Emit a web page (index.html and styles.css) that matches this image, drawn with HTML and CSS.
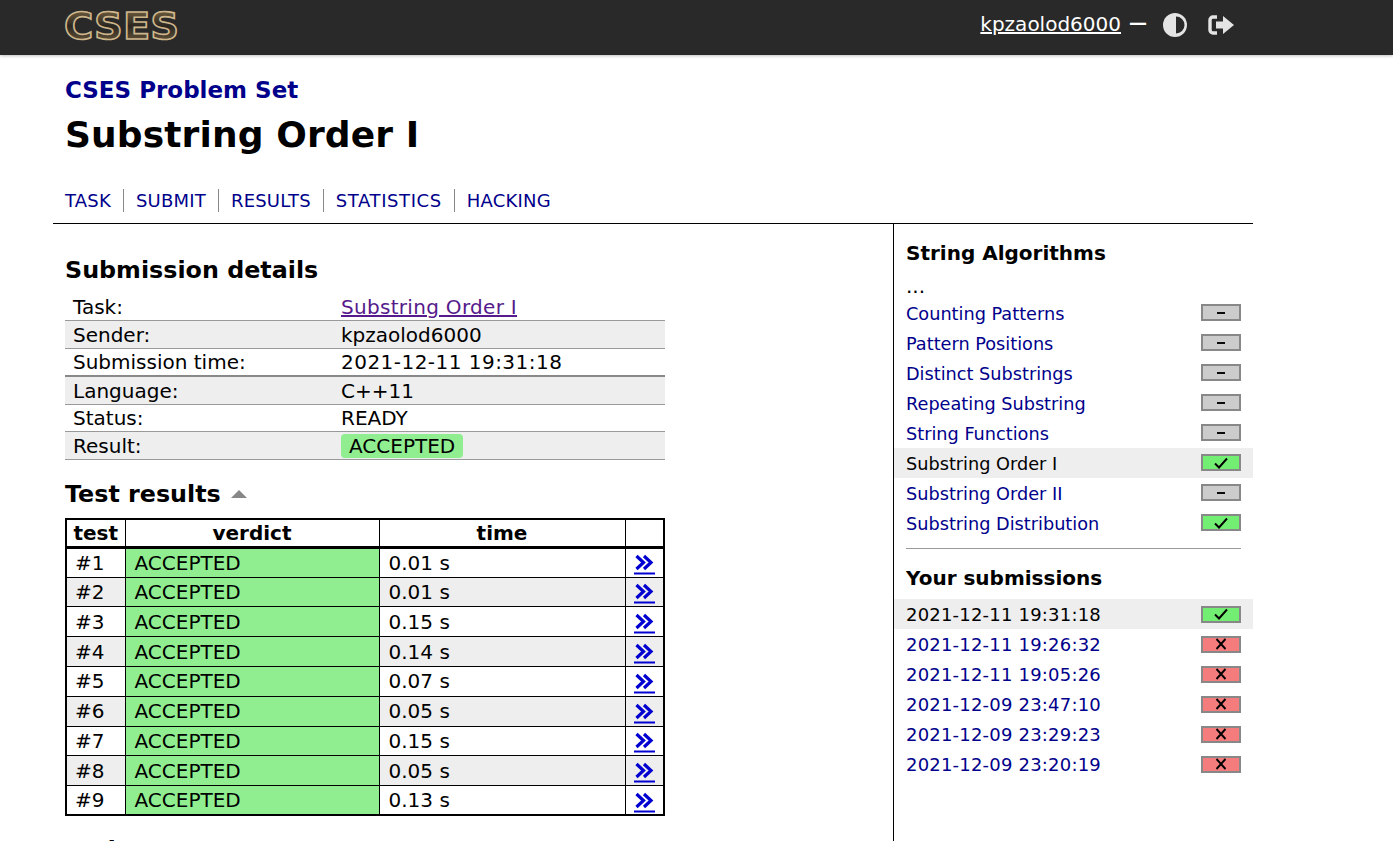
FILE: index.html
```html
<!DOCTYPE html>
<html lang="en">
<head>
    <meta charset="UTF-8">
    <title>CSES - Substring Order I - Submission details</title>
    <link rel="stylesheet" href="styles.css">
</head>
<body>
    <div class="header">
        <div class="header-inner">
            <a class="logo" href="#" aria-label="CSES">
                <svg width="130" height="36" viewBox="0 0 130 36">
                    <defs>
                        <linearGradient id="logoFill" x1="0" y1="0" x2="0" y2="1">
                            <stop offset="0" stop-color="#8a7248"/>
                            <stop offset="0.5" stop-color="#2a2620"/>
                            <stop offset="1" stop-color="#7a6440"/>
                        </linearGradient>
                    </defs>
                    <text class="logo-text" x="1" y="32" textLength="115" lengthAdjust="spacingAndGlyphs">CSES</text>
                </svg>
            </a>
            <div class="controls">
                <a class="username" href="#">kpzaolod6000</a>
                <span class="dash">—</span>
                <svg class="ctrl-icon theme" width="26" height="26" viewBox="0 0 26 26">
                    <circle cx="13" cy="13" r="12" fill="#e4e4e4"/>
                    <path d="M14 4.500a8.500 8.500 0 0 1 0 17z" fill="#292929"/>
                </svg>
                <svg class="ctrl-icon logout" width="28" height="24" viewBox="0 0 28 24">
                    <path d="M10 4H6a3 3 0 0 0-3 3v10a3 3 0 0 0 3 3h4" fill="none" stroke="#e4e4e4" stroke-width="3.4"/>
                    <path d="M9 8.500h7V3l11 9-11 9v-5.500H9z" fill="#e4e4e4"/>
                </svg>
            </div>
        </div>
    </div>

    <div class="page">
        <div class="title-block">
            <div class="crumb">CSES Problem Set</div>
            <h1>Substring Order I</h1>
            <ul class="nav">
                <li><a href="#">TASK</a></li>
                <li><a href="#">SUBMIT</a></li>
                <li><a href="#">RESULTS</a></li>
                <li class="wide"><a href="#">STATISTICS</a></li>
                <li><a href="#">HACKING</a></li>
            </ul>
        </div>

        <div class="columns">
            <div class="content">
                <h2 class="first">Submission details</h2>
                <table class="details">
                    <tr><td class="key">Task:</td><td><a class="visited" href="#">Substring Order I</a></td></tr>
                    <tr><td class="key">Sender:</td><td>kpzaolod6000</td></tr>
                    <tr><td class="key">Submission time:</td><td class="stamp">2021-12-11 19:31:18</td></tr>
                    <tr><td class="key">Language:</td><td>C++11</td></tr>
                    <tr><td class="key">Status:</td><td>READY</td></tr>
                    <tr><td class="key">Result:</td><td><span class="badge">ACCEPTED</span></td></tr>
                </table>

                <h2>Test results <span class="arrow"></span></h2>
                <table class="tests">
                    <tr><th class="col-test">test</th><th class="col-verdict">verdict</th><th class="col-time">time</th><th class="col-link"></th></tr>
                    <tr><td>#1</td><td class="ok">ACCEPTED</td><td class="secs">0.01 s</td><td class="more"><a href="#"><svg width="22" height="22" viewBox="0 0 22 22"><use href="#chevrons"/></svg></a></td></tr>
                    <tr><td>#2</td><td class="ok">ACCEPTED</td><td class="secs">0.01 s</td><td class="more"><a href="#"><svg width="22" height="22" viewBox="0 0 22 22"><use href="#chevrons"/></svg></a></td></tr>
                    <tr><td>#3</td><td class="ok">ACCEPTED</td><td class="secs">0.15 s</td><td class="more"><a href="#"><svg width="22" height="22" viewBox="0 0 22 22"><use href="#chevrons"/></svg></a></td></tr>
                    <tr><td>#4</td><td class="ok">ACCEPTED</td><td class="secs">0.14 s</td><td class="more"><a href="#"><svg width="22" height="22" viewBox="0 0 22 22"><use href="#chevrons"/></svg></a></td></tr>
                    <tr><td>#5</td><td class="ok">ACCEPTED</td><td class="secs">0.07 s</td><td class="more"><a href="#"><svg width="22" height="22" viewBox="0 0 22 22"><use href="#chevrons"/></svg></a></td></tr>
                    <tr><td>#6</td><td class="ok">ACCEPTED</td><td class="secs">0.05 s</td><td class="more"><a href="#"><svg width="22" height="22" viewBox="0 0 22 22"><use href="#chevrons"/></svg></a></td></tr>
                    <tr><td>#7</td><td class="ok">ACCEPTED</td><td class="secs">0.15 s</td><td class="more"><a href="#"><svg width="22" height="22" viewBox="0 0 22 22"><use href="#chevrons"/></svg></a></td></tr>
                    <tr><td>#8</td><td class="ok">ACCEPTED</td><td class="secs">0.05 s</td><td class="more"><a href="#"><svg width="22" height="22" viewBox="0 0 22 22"><use href="#chevrons"/></svg></a></td></tr>
                    <tr><td>#9</td><td class="ok">ACCEPTED</td><td class="secs">0.13 s</td><td class="more"><a href="#"><svg width="22" height="22" viewBox="0 0 22 22"><use href="#chevrons"/></svg></a></td></tr>
                </table>

                <h2>Code</h2>
            </div>

            <div class="sidebar">
                <h3>String Algorithms</h3>
                <div class="dots">...</div>
                <ul class="task-list problems">
                    <li><a href="#">Counting Patterns</a><span class="box none"><svg viewBox="0 0 16 12"><use href="#dash"/></svg></span></li>
                    <li><a href="#">Pattern Positions</a><span class="box none"><svg viewBox="0 0 16 12"><use href="#dash"/></svg></span></li>
                    <li><a href="#">Distinct Substrings</a><span class="box none"><svg viewBox="0 0 16 12"><use href="#dash"/></svg></span></li>
                    <li><a href="#">Repeating Substring</a><span class="box none"><svg viewBox="0 0 16 12"><use href="#dash"/></svg></span></li>
                    <li><a href="#">String Functions</a><span class="box none"><svg viewBox="0 0 16 12"><use href="#dash"/></svg></span></li>
                    <li class="current">Substring Order I<span class="box good"><svg viewBox="0 0 16 12"><use href="#check"/></svg></span></li>
                    <li><a href="#">Substring Order II</a><span class="box none"><svg viewBox="0 0 16 12"><use href="#dash"/></svg></span></li>
                    <li><a href="#">Substring Distribution</a><span class="box good"><svg viewBox="0 0 16 12"><use href="#check"/></svg></span></li>
                </ul>
                <hr>
                <h3 class="spaced">Your submissions</h3>
                <ul class="task-list dates">
                    <li class="current">2021-12-11 19:31:18<span class="box good"><svg viewBox="0 0 16 12"><use href="#check"/></svg></span></li>
                    <li><a href="#">2021-12-11 19:26:32</a><span class="box bad"><svg viewBox="0 0 16 12"><use href="#cross"/></svg></span></li>
                    <li><a href="#">2021-12-11 19:05:26</a><span class="box bad"><svg viewBox="0 0 16 12"><use href="#cross"/></svg></span></li>
                    <li><a href="#">2021-12-09 23:47:10</a><span class="box bad"><svg viewBox="0 0 16 12"><use href="#cross"/></svg></span></li>
                    <li><a href="#">2021-12-09 23:29:23</a><span class="box bad"><svg viewBox="0 0 16 12"><use href="#cross"/></svg></span></li>
                    <li><a href="#">2021-12-09 23:20:19</a><span class="box bad"><svg viewBox="0 0 16 12"><use href="#cross"/></svg></span></li>
                </ul>
            </div>
        </div>
    </div>

    <svg class="icon-defs" width="0" height="0">
        <defs>
            <g id="chevrons">
                <path d="M2.500 3l7 6.500-7 6.500M10 3l7 6.500-7 6.500" fill="none" stroke="#0000d0" stroke-width="3.200"/>
                <path d="M0 20.500h21" stroke="#0000d0" stroke-width="2"/>
            </g>
            <path id="dash" d="M4 6h8"/>
            <path id="check" d="M2 6.500l4 4 8-9"/>
            <path id="cross" d="M3.500 1l9 10M12.500 1l-9 10"/>
        </defs>
    </svg>
</body>
</html>
```

FILE: styles.css
```css
* {
    box-sizing: border-box;
}

body {
    margin: 0;
    font-family: "DejaVu Sans", Verdana, sans-serif;
    font-size: 18px;
    color: #000;
    background: #fff;
}

a {
    color: #00008b;
    text-decoration: none;
}

.icon-defs {
    position: absolute;
}

.header {
    height: 55px;
    background: #292929;
    box-shadow: 0 1px 3px rgba(0,0,0,0.25);
}

.header-inner {
    width: 1200px;
    margin-left: 53px;
    padding: 0 12px 0 10px;
    height: 50px;
    display: flex;
    justify-content: space-between;
    align-items: center;
}

.logo {
    display: block;
    height: 36px;
}

.logo-text {
    font-family: "DejaVu Sans", sans-serif;
    font-weight: bold;
    font-size: 38px;
    fill: url(#logoFill);
    stroke: #cdb68c;
    stroke-width: 1.6px;
}

.controls {
    display: flex;
    align-items: center;
    padding-right: 6px;
}

.username {
    color: #fff;
    font-size: 20px;
    line-height: 24px;
    margin-top: -2px;
    text-decoration: underline;
}

.dash {
    color: #fff;
    font-size: 18px;
    font-weight: bold;
    margin-left: 8px;
    margin-top: -5px;
}

.ctrl-icon.theme {
    margin-left: 15px;
}

.ctrl-icon.logout {
    margin-left: 19px;
}

.page {
    width: 1200px;
    margin-left: 53px;
}

.title-block {
    padding: 20px 12px 0;
    height: 169px;
    border-bottom: 1px solid #000;
}

.crumb {
    color: #00008b;
    font-size: 23px;
    font-weight: bold;
    line-height: 30px;
}

h1 {
    margin: 8px 0 0;
    font-size: 36px;
    line-height: 44px;
    letter-spacing: 0.12px;
}

.nav {
    list-style: none;
    margin: 32px 0 0;
    padding: 0;
    display: flex;
}

.nav li {
    height: 23px;
    line-height: 24px;
    padding: 0 12px;
    letter-spacing: 0.2px;
    border-right: 1px solid #888;
}

.nav li.wide {
    letter-spacing: 0.6px;
}

.nav li:first-child {
    padding-left: 0;
}

.nav li:last-child {
    border-right: none;
}

.columns {
    display: flex;
}

.content {
    width: 840px;
    padding: 0 12px;
}

h2 {
    margin: 18px 0 8px;
    font-size: 23.8px;
    line-height: 32px;
}

h2.first {
    margin-top: 30px;
    margin-bottom: 7px;
}

.arrow {
    display: inline-block;
    width: 0;
    height: 0;
    margin-left: 2px;
    vertical-align: 4px;
    border-left: 8px solid transparent;
    border-right: 8px solid transparent;
    border-bottom: 8px solid #888;
}

.details {
    width: 600px;
    border-collapse: collapse;
    font-size: 20px;
}

.details td {
    height: 27.8px;
    padding: 0 8px;
    border-bottom: 1px solid #999;
    line-height: 26px;
}

.details .key {
    width: 268px;
}

.details tr:nth-child(even) td {
    background: #eee;
}

.details tr:nth-child(3) td {
    border-bottom: 2px solid #888;
}

.details .stamp {
    letter-spacing: 0.47px;
}

.visited {
    color: #551a8b;
    letter-spacing: 0.3px;
    text-decoration: underline;
}

.badge {
    display: inline-block;
    padding: 0 8px;
    background: #90ee90;
    border-radius: 4px;
    line-height: 24px;
}

.tests {
    width: 600px;
    margin-bottom: 2px;
    border-collapse: collapse;
    font-size: 20px;
    border: 2px solid #000;
}

.tests th {
    height: 28px;
    padding: 0;
    border: 1px solid #000;
    border-bottom: 3px solid #000;
    line-height: 24px;
}

.tests td {
    height: 29.8px;
    padding: 0 8px;
    border: 1px solid #000;
}

.tests tr:nth-child(odd) td {
    background: #eee;
}

.tests td.ok,
.tests tr:nth-child(odd) td.ok {
    padding-left: 9px;
    background: #90ee90;
}

.tests td.secs {
    padding-left: 9px;
}

.col-test {
    width: 59px;
}

.col-verdict {
    width: 254px;
}

.col-time {
    width: 246px;
}

.tests td.more {
    padding: 0 0 0 2px;
    text-align: center;
    line-height: 0;
}

.more svg {
    display: inline-block;
    margin-top: 3px;
}

.sidebar {
    width: 360px;
    min-height: 618px;
    padding-top: 16px;
    border-left: 1px solid #000;
}

h3 {
    margin: 0 12px;
    font-size: 20px;
    line-height: 26px;
}

h3.spaced {
    margin-bottom: 8px;
}

.dots {
    margin: 11px 12px 3px;
    line-height: 18px;
    font-size: 20px;
}

.task-list {
    list-style: none;
    margin: 0;
    padding: 0;
    font-size: 17.7px;
}

.task-list.dates {
    font-size: 18px;
    letter-spacing: 0.2px;
}

.task-list li {
    height: 30px;
    padding: 0 12px;
    display: flex;
    justify-content: space-between;
    align-items: center;
}

.task-list.problems li {
    padding-top: 2px;
}

.task-list.problems .box {
    margin-bottom: 3px;
}

.task-list li.current {
    background: #eee;
}

.box {
    width: 40px;
    height: 17px;
    border: 2px solid #888;
    display: flex;
    align-items: center;
    justify-content: center;
}

.box svg {
    width: 16px;
    height: 12px;
    fill: none;
    stroke: #000;
    stroke-width: 1.9;
}

.box.none {
    background: #ccc;
}

.box.good {
    background: #72ee72;
}

.box.bad {
    background: #f57c7c;
}

hr {
    height: 1px;
    margin: 10px 12px 16px;
    border: none;
    background: #999;
}
```
